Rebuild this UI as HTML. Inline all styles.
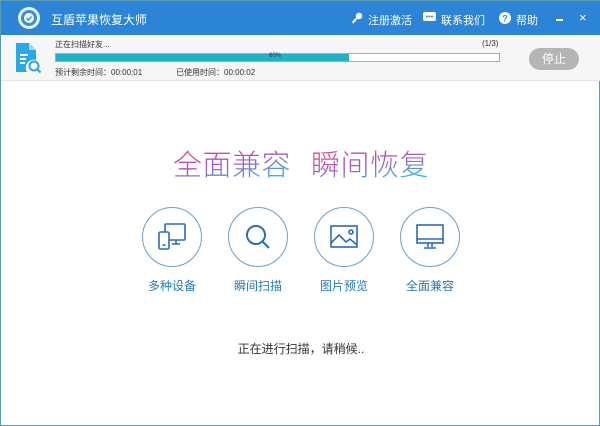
<!DOCTYPE html>
<html><head><meta charset="utf-8"><style>
*{margin:0;padding:0;box-sizing:border-box}
body{width:600px;height:426px;overflow:hidden;background:#fff;font-family:"Liberation Sans","Noto Sans CJK SC",sans-serif;position:relative;border:1px solid #5a9ab0}
.a{position:absolute}
.top{left:0;top:0;width:600px;height:34px;background:#2b84d6}
.t{color:#fff;font-size:11px}
.prog{left:0;top:34px;width:600px;height:46px;background:#f6f6f6;border-bottom:1px solid #e6e6e6}
.s{font-size:8px;color:#333}
.circ{width:60px;height:60px;border:1.5px solid #6b9fc8;border-radius:50%}
.lab{font-size:12px;color:#2a7ac0;width:90px;text-align:center}
.slogan{font-size:29px;font-weight:300;background:linear-gradient(170deg,#f0406a 10%,#b050c0 45%,#30b8ea 85%);-webkit-background-clip:text;color:transparent;letter-spacing:0.5px}
</style></head><body>
<div class="a top"></div>
<svg class="a" style="left:16px;top:5px" width="24" height="24" viewBox="0 0 24 24"><circle cx="12" cy="12" r="11" fill="#e8f2fb"/><circle cx="12" cy="12" r="8" fill="#3a8ed8"/><circle cx="12" cy="12" r="5" fill="#fff"/><path d="M9.5 12l2 2 3-3.5" stroke="#3a8ed8" stroke-width="1.5" fill="none"/></svg>
<div class="a t" style="left:50px;top:10px;font-size:12px">互盾苹果恢复大师</div>
<svg class="a" style="left:350px;top:11px" width="12" height="12" viewBox="0 0 12 12"><circle cx="8" cy="4" r="3.2" fill="#fff"/><path d="M6 6L2 10l1 1M3.5 8.5l1 1" stroke="#fff" stroke-width="1.6"/></svg>
<div class="a t" style="left:367px;top:11px">注册激活</div>
<svg class="a" style="left:422px;top:11px" width="13" height="11" viewBox="0 0 13 11"><rect x="0" y="0" width="13" height="9" rx="2" fill="#fff"/><circle cx="4" cy="4.5" r="1" fill="#2b84d6"/><circle cx="6.5" cy="4.5" r="1" fill="#2b84d6"/><circle cx="9" cy="4.5" r="1" fill="#2b84d6"/></svg>
<div class="a t" style="left:440px;top:11px">联系我们</div>
<svg class="a" style="left:498px;top:11px" width="12" height="12" viewBox="0 0 12 12"><circle cx="6" cy="6" r="6" fill="#fff"/><text x="6" y="9.5" font-size="9" font-weight="bold" text-anchor="middle" fill="#2b84d6" font-family="Liberation Sans">?</text></svg>
<div class="a t" style="left:515px;top:11px">帮助</div>
<div class="a" style="left:555px;top:18px;width:7px;height:2px;background:#fff"></div>
<div class="a t" style="left:578px;top:9px;font-size:13px">×</div>
<div class="a prog"></div>
<svg class="a" style="left:12px;top:40px" width="30" height="34" viewBox="0 0 30 34"><path d="M3 2h13l7 7v10a8 8 0 0 0-9 12H3z" fill="#2aa8e6"/><path d="M16 2v7h7" fill="#9fd6f2"/><path d="M7 14h8M7 18h6M7 22h5" stroke="#fff" stroke-width="2"/><circle cx="21" cy="25" r="4.5" stroke="#2aa8e6" stroke-width="2" fill="none"/><path d="M24 28l3.5 3.5" stroke="#2aa8e6" stroke-width="2.2"/></svg>
<div class="a s" style="left:54px;top:38px">正在扫描好友...</div>
<div class="a s" style="left:481px;top:38px">(1/3)</div>
<div class="a" style="left:54px;top:52px;width:445px;height:9px;border:1px solid #aaa;background:#fff"><div style="width:293px;height:7px;background:#1fb1c7"></div></div>
<div class="a" style="left:268px;top:52px;font-size:6px;color:#234">60%</div>
<div class="a s" style="left:54px;top:66px">预计剩余时间：00:00:01</div>
<div class="a s" style="left:175px;top:66px">已使用时间：00:00:02</div>
<div class="a" style="left:528px;top:47px;width:50px;height:22px;border-radius:11px;background:#b5b5b5;color:#fff;font-size:12px;text-align:center;line-height:22px">停止</div>
<div class="a slogan" style="left:172px;top:141px">全面兼容</div>
<div class="a slogan" style="left:310px;top:141px">瞬间恢复</div>
<div class="a circ" style="left:141px;top:206px"></div>
<div class="a circ" style="left:227px;top:206px"></div>
<div class="a circ" style="left:313px;top:206px"></div>
<div class="a circ" style="left:399px;top:206px"></div>
<svg class="a" style="left:155px;top:220px" width="32" height="32" viewBox="0 0 32 32" fill="none" stroke="#2a6cb8" stroke-width="1.6"><rect x="9" y="3" width="20" height="16" rx="1"/><path d="M16 23h8M20 19v4"/><rect x="3" y="11" width="10" height="17" rx="1.5" fill="#fff"/><path d="M6.5 24h3"/></svg>
<svg class="a" style="left:241px;top:220px" width="32" height="32" viewBox="0 0 32 32" fill="none" stroke="#2a6cb8" stroke-width="2"><circle cx="14" cy="14" r="9"/><path d="M20.5 20.5L27 27"/></svg>
<svg class="a" style="left:327px;top:220px" width="32" height="32" viewBox="0 0 32 32" fill="none" stroke="#2a6cb8" stroke-width="1.6"><rect x="3" y="5" width="26" height="21"/><path d="M3 22l8-8 7 7 4-3 7 6"/><circle cx="23" cy="11" r="2"/></svg>
<svg class="a" style="left:413px;top:220px" width="32" height="32" viewBox="0 0 32 32" fill="none" stroke="#2a6cb8" stroke-width="1.6"><rect x="3" y="4" width="26" height="18"/><path d="M3 18h26M14 22v4M18 22v4M10 27h12"/></svg>
<div class="a lab" style="left:126px;top:276px">多种设备</div>
<div class="a lab" style="left:212px;top:276px">瞬间扫描</div>
<div class="a lab" style="left:298px;top:276px">图片预览</div>
<div class="a lab" style="left:384px;top:276px">全面兼容</div>
<div class="a" style="left:0;width:600px;top:339px;text-align:center;font-size:12px;color:#333">正在进行扫描，请稍候..</div>
</body></html>
